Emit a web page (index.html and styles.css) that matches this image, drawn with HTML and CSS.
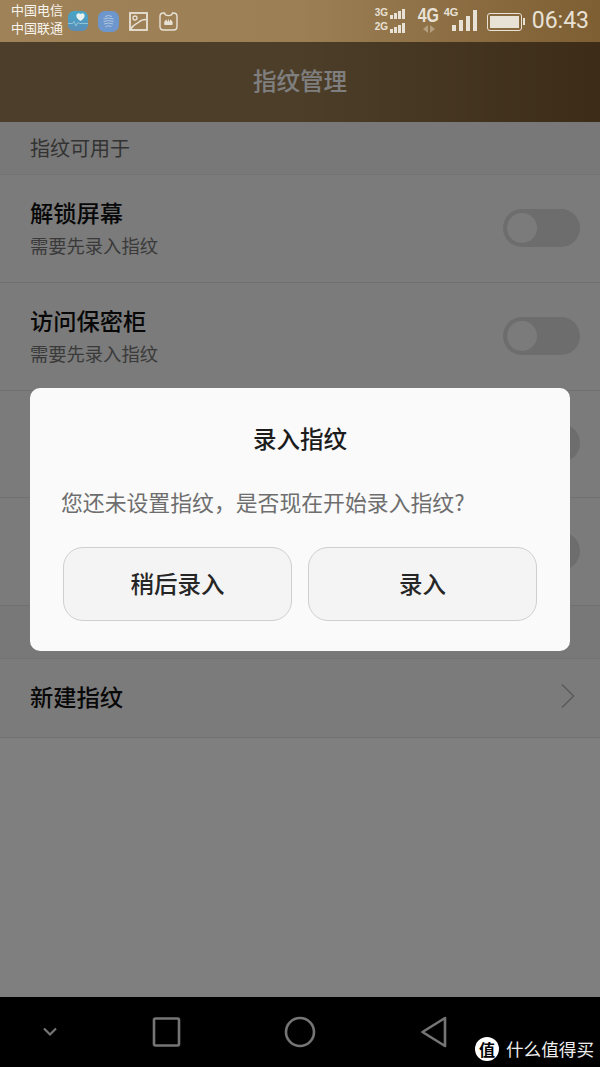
FILE: index.html
```html
<!DOCTYPE html>
<html lang="zh-CN">
<head>
    <meta charset="UTF-8">
    <meta name="viewport" content="width=device-width, initial-scale=1.0">
    <title>指纹管理</title>
    <link rel="stylesheet" href="styles.css">
</head>
<body>
    <div class="phone">
        <div class="status-bar">
            <div class="carriers"><span>中国电信</span><span>中国联通</span></div>
            <svg class="notif n1" width="20" height="20" viewBox="0 0 20 20">
                <defs>
                    <linearGradient id="tealGrad" x1="0" y1="0" x2="0" y2="1">
                        <stop offset="0" stop-color="#45a6c9"/>
                        <stop offset="1" stop-color="#5b8db5"/>
                    </linearGradient>
                </defs>
                <rect width="20" height="20" rx="6" fill="url(#tealGrad)"/>
                <path d="M12.500 3c1.400-1.500 4.200-.8 4.200 1.800 0 2.200-2.300 3.900-4.200 5.300-1.900-1.400-4.200-3.100-4.200-5.300 0-2.600 2.800-3.300 4.200-1.800z" fill="#e8f1ef"/>
                <path d="M0 12.500h4.500l1.500-2 2 4.500 2-3.500 1.500 1h8.500" fill="none" stroke="#a2cfdc" stroke-width=".8"/>
            </svg>
            <svg class="notif n2" width="21" height="21" viewBox="0 0 21 21">
                <rect width="21" height="21" rx="7" fill="#6c96cc"/>
                <path d="M7 5.500q3.500-2 7 0M5.500 8q5-2 10 0M5.500 10.500q5-2 10 0M6 13q4.500-2 9 0M7.500 15.500q3-1.500 6 0" fill="none" stroke="#b4c8e0" stroke-width="1"/>
            </svg>
            <svg class="notif n3" width="19" height="19" viewBox="0 0 19 19">
                <rect x="1" y="1" width="17" height="17" fill="none" stroke="#e8e1d5" stroke-width="1.800"/>
                <circle cx="6" cy="6" r="2" fill="none" stroke="#e8e1d5" stroke-width="1.300"/>
                <path d="M2 17c2-5 6-5 8-7 1.500-1.500 3-2.500 7-2.500" fill="none" stroke="#e8e1d5" stroke-width="1.500"/>
            </svg>
            <svg class="notif n4" width="19" height="19" viewBox="0 0 19 19">
                <path d="M5.500 1H4.500Q1 1 1 4.500v10Q1 18 4.500 18h10q3.500 0 3.500-3.500v-10Q18 1 14.500 1H13.500c-.5 3.500-7.500 3.500-8 0z" fill="none" stroke="#e8e1d5" stroke-width="1.400"/>
                <path d="M5.500 13c-1-2.500 0-4.500 2-5.500l1 2.500.9-3.500.9 3.500 1-2.500c2 1 3 3 2 5.500z" fill="#e8e1d5"/>
            </svg>
            <div class="status-right">
                <div class="sim-signals">
                    <div class="sim-row"><span>3G</span><i class="b1"></i><i class="b2"></i><i class="b3"></i><i class="b4"></i></div>
                    <div class="sim-row"><span>2G</span><i class="b1"></i><i class="b2"></i><i class="b3"></i><i class="b4"></i></div>
                </div>
                <div class="data-type">
                    <span>4G</span>
                    <svg width="14" height="8" viewBox="0 0 14 8"><path d="M6 0v8L1 4zM8 0v8l5-4z" fill="#b39f80"/></svg>
                </div>
                <div class="net-signal">
                    <span>4G</span>
                    <div class="bars"><i class="s1"></i><i class="s2"></i><i class="s3"></i><i class="s4"></i></div>
                </div>
                <div class="battery"><div class="battery-fill"></div></div>
                <div class="clock">06:43</div>
            </div>
        </div>

        <div class="title-bar">指纹管理</div>

        <div class="section-head">指纹可用于</div>
        <div class="row">
            <div class="row-text">
                <div class="row-title">解锁屏幕</div>
                <div class="row-sub">需要先录入指纹</div>
            </div>
            <div class="switch"></div>
        </div>
        <div class="row">
            <div class="row-text">
                <div class="row-title">访问保密柜</div>
                <div class="row-sub">需要先录入指纹</div>
            </div>
            <div class="switch"></div>
        </div>
        <div class="row">
            <div class="switch"></div>
        </div>
        <div class="row">
            <div class="switch"></div>
        </div>
        <div class="section-head"></div>
        <div class="row row-link">
            <div class="row-title">新建指纹</div>
            <svg width="16" height="26" viewBox="0 0 16 26"><path d="M2 1.500 13.500 13 2 24.500" fill="none" stroke="#b4b4b4" stroke-width="1.500"/></svg>
        </div>
        <div class="spacer"></div>

        <div class="nav-bar">
            <svg class="nav-icon" width="20" height="14" viewBox="0 0 20 14"><path d="M4 3.500l6 6 6-6" fill="none" stroke="#757575" stroke-width="2.200"/></svg>
            <svg class="nav-icon" width="30" height="32" viewBox="0 0 30 32"><rect x="2" y="2.500" width="25" height="27" rx="1.500" fill="none" stroke="#757575" stroke-width="2.600"/></svg>
            <svg class="nav-icon" width="32" height="32" viewBox="0 0 32 32"><circle cx="16" cy="16" r="14" fill="none" stroke="#757575" stroke-width="2.600"/></svg>
            <svg class="nav-icon" width="28" height="32" viewBox="0 0 28 32"><path d="M25 2 2.500 16 25 30z" fill="none" stroke="#757575" stroke-width="2.600" stroke-linejoin="round"/></svg>
        </div>

        <div class="overlay"></div>
        <div class="dialog">
            <div class="dialog-title">录入指纹</div>
            <div class="dialog-text">您还未设置指纹，是否现在开始录入指纹?</div>
            <div class="dialog-buttons">
                <button>稍后录入</button>
                <button>录入</button>
            </div>
        </div>

        <div class="watermark">
            <span class="wm-badge">值</span>
            <span>什么值得买</span>
        </div>
    </div>
</body>
</html>
```

FILE: styles.css
```css
* {
    box-sizing: border-box;
}
html, body {
    margin: 0;
    padding: 0;
}
body {
    font-family: "Noto Sans CJK SC", "Noto Sans", sans-serif;
}
.phone {
    position: relative;
    width: 600px;
    height: 1067px;
    overflow: hidden;
    display: flex;
    flex-direction: column;
    background: #f5f5f5;
}

/* status bar */
.status-bar {
    height: 42px;
    flex: none;
    display: flex;
    align-items: center;
    padding: 0 11px;
    color: #e8e1d5;
    background: linear-gradient(90deg, #9f8257 0%, #9c7f55 50%, #7e5e33 100%);
}
.carriers {
    display: flex;
    flex-direction: column;
    align-self: flex-start;
    width: 57px;
    padding-top: 1px;
    font-size: 13px;
    line-height: 18px;
    white-space: nowrap;
    color: #f8f5ee;
}
.notif {
    flex: none;
}
.n1 { margin-right: 10px; }
.n2 { margin-right: 10px; }
.n3 { margin-right: 11px; }
.status-right {
    margin-left: auto;
    display: flex;
    align-items: center;
}
.sim-signals {
    width: 30px;
    margin-right: 14px;
    margin-bottom: 4px;
}
.sim-row {
    display: flex;
    align-items: flex-end;
    gap: 1px;
    height: 14px;
    font-family: "Liberation Sans", sans-serif;
    font-size: 10px;
    font-weight: bold;
}
.sim-row span {
    width: 14px;
    align-self: flex-start;
    margin-top: 2px;
    line-height: 11px;
}
.sim-row i {
    width: 3px;
    background: #e8e1d5;
}
.sim-row .b1 { height: 4px; }
.sim-row .b2 { height: 6px; }
.sim-row .b3 { height: 8px; }
.sim-row .b4 { height: 10px; }
.data-type {
    width: 20px;
    margin-right: 5px;
    margin-bottom: 3px;
    display: flex;
    flex-direction: column;
    align-items: center;
    font-family: "Liberation Sans", sans-serif;
    font-size: 20px;
    font-weight: bold;
    line-height: 18px;
}
.data-type span {
    transform: scaleX(.8);
}
.data-type svg {
    margin-top: 1px;
}
.net-signal {
    display: flex;
    align-items: flex-start;
    width: 33px;
    margin-right: 10px;
    margin-bottom: 4px;
    font-family: "Liberation Sans", sans-serif;
    font-size: 11px;
    font-weight: bold;
}
.net-signal span {
    width: 8px;
    line-height: 10px;
    white-space: nowrap;
}
.bars {
    display: flex;
    align-items: flex-end;
    gap: 3px;
    height: 21px;
    margin-top: 3px;
}
.bars i {
    width: 4px;
    background: #e8e1d5;
}
.bars .s1 { height: 6px; }
.bars .s2 { height: 11px; }
.bars .s3 { height: 15px; }
.bars .s4 { height: 21px; }
.battery {
    position: relative;
    width: 35px;
    height: 18px;
    margin-right: 10px;
    margin-top: 2px;
    padding: 2px;
    border: 1.500px solid #e8e1d5;
    border-radius: 3px;
}
.battery::after {
    content: "";
    position: absolute;
    right: -4px;
    top: 4px;
    width: 2px;
    height: 7px;
    background: #e8e1d5;
}
.battery-fill {
    height: 100%;
    background: #e8e1d5;
}
.clock {
    font-family: "Roboto", sans-serif;
    font-size: 23px;
    line-height: 42px;
}

/* title */
.title-bar {
    height: 80px;
    flex: none;
    display: flex;
    align-items: center;
    justify-content: center;
    padding-bottom: 4px;
    font-size: 23.500px;
    font-weight: 500;
    color: #fff;
    background: linear-gradient(90deg, #9a7c56 0%, #9a7c53 50%, #7a5a30 100%);
}

/* list */
.section-head {
    height: 53px;
    flex: none;
    display: flex;
    align-items: center;
    padding: 0 0 2px 30px;
    font-size: 20px;
    color: #666;
    background: #f0f0f0;
    border-bottom: 1px solid #e6e6e6;
}
.row {
    height: 107.750px;
    flex: none;
    display: flex;
    align-items: center;
    justify-content: space-between;
    padding: 0 20px 0 30px;
    background: #f6f6f6;
    border-bottom: 1px solid #e0e0e0;
}
.row-text {
    padding-bottom: 2px;
}
.row-title {
    font-size: 23.250px;
    font-weight: 500;
    line-height: 30px;
    color: #111;
}
.row-sub {
    margin-top: 5px;
    font-size: 18.300px;
    line-height: 26px;
    color: #757575;
}
.switch {
    position: relative;
    width: 77px;
    height: 38px;
    margin-left: auto;
    margin-bottom: 1px;
    border-radius: 19px;
    background: #dadada;
}
.switch::before {
    content: "";
    position: absolute;
    left: 4px;
    top: 4px;
    width: 30px;
    height: 30px;
    border-radius: 50%;
    background: #f6f6f6;
}
.row-link {
    height: 79px;
    padding-right: 24px;
    padding-bottom: 4px;
}
.spacer {
    flex: 1;
    background: #fff;
}

/* nav */
.nav-bar {
    height: 70px;
    flex: none;
    position: relative;
    z-index: 2;
    display: flex;
    align-items: center;
    padding-left: 40px;
    background: #000;
}
.nav-icon {
    flex: none;
}
.nav-icon:nth-child(1) { margin-right: 92px; }
.nav-icon:nth-child(2) { margin-right: 102px; }
.nav-icon:nth-child(3) { margin-right: 104px; }

/* dim layer + dialog */
.overlay {
    position: absolute;
    left: 0;
    top: 42px;
    width: 600px;
    height: 955px;
    background: rgba(0, 0, 0, 0.5);
}
.dialog {
    position: absolute;
    left: 30px;
    top: 388px;
    z-index: 3;
    width: 540px;
    height: 263px;
    padding: 0 33px;
    display: flex;
    flex-direction: column;
    background: #fafafa;
    border-radius: 10px;
}
.dialog-title {
    margin-top: 32px;
    line-height: 36px;
    text-align: center;
    font-size: 23.500px;
    font-weight: 500;
    color: #1c1c1c;
}
.dialog-text {
    margin: 28px 0 0 -2px;
    line-height: 36px;
    font-size: 21.850px;
    color: #6e6e6e;
    white-space: nowrap;
}
.dialog-buttons {
    display: flex;
    gap: 16px;
    margin-top: 27px;
}
.dialog-buttons button {
    width: 229px;
    height: 74px;
    padding: 0 0 2px;
    border: 1px solid #cfcfcf;
    border-radius: 20px;
    background: #f4f4f4;
    font-family: inherit;
    font-size: 23.500px;
    font-weight: 500;
    color: #262626;
}

/* watermark */
.watermark {
    position: absolute;
    right: 6px;
    bottom: 6px;
    z-index: 4;
    display: flex;
    align-items: center;
    gap: 7px;
    font-size: 17.600px;
    color: #eee;
}
.wm-badge {
    width: 24px;
    height: 24px;
    border-radius: 50%;
    background: #fff;
    color: #000;
    font-size: 16px;
    font-weight: bold;
    line-height: 24px;
    text-align: center;
}
```
